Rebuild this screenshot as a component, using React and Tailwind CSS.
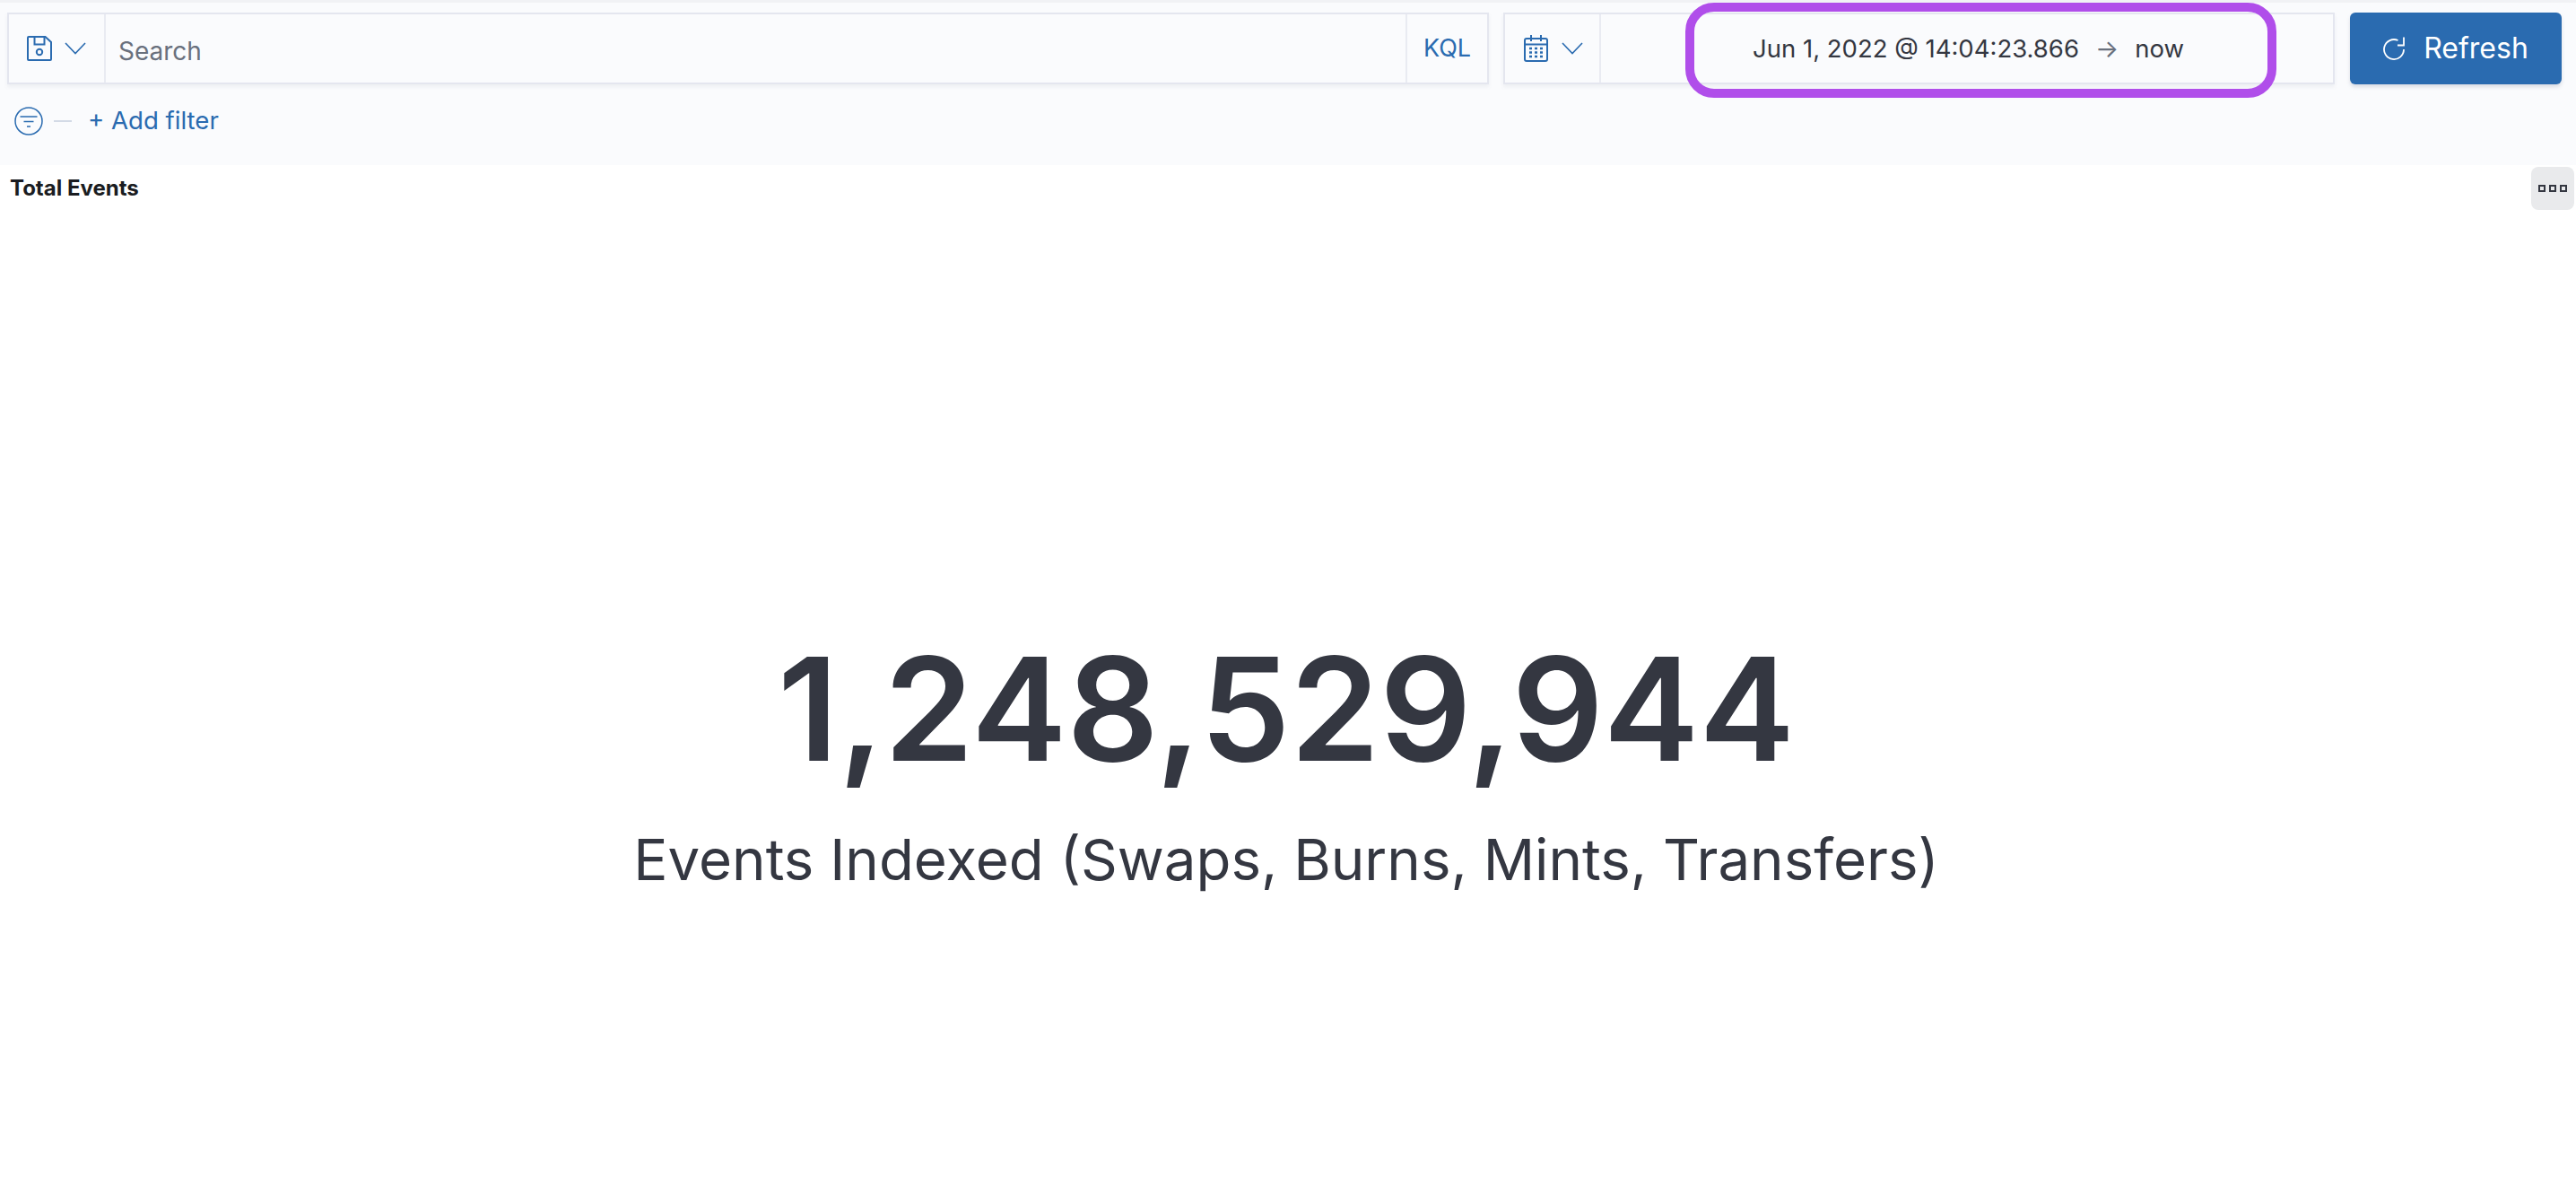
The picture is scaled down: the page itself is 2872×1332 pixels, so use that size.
function Chevron() {
  return (
    <svg viewBox="0 0 24 14" fill="none" stroke="#2a6bb0" strokeWidth="1.600" className="w-[24px] h-[14px]">
      <path d="M1 1l11 11.500L23 1" />
    </svg>
  )
}

function SaveIcon() {
  return (
    <svg viewBox="0 0 28 28" fill="none" stroke="#2a6bb0" strokeWidth="2" className="w-[28px] h-[28px]">
      <path d="M1 2a1 1 0 0 1 1-1h18.500L27 7v19a1 1 0 0 1-1 1H2a1 1 0 0 1-1-1z" />
      <path d="M8.500 1v8.500h11V1" />
      <circle cx="14" cy="18" r="3.200" />
    </svg>
  )
}

function CalendarIcon() {
  return (
    <svg viewBox="0 0 27 30" fill="none" stroke="#2a6bb0" className="w-[27px] h-[30px]">
      <rect x="1" y="4" width="25" height="25" rx="2" strokeWidth="2" />
      <path d="M1 10.500h25M8 0v7M19 0v7" strokeWidth="2" />
      <path d="M6 15h15M6 19.500h15M6 24h15" strokeWidth="2.500" strokeDasharray="3 3" />
    </svg>
  )
}

function FilterIcon() {
  return (
    <svg viewBox="0 0 32 32" fill="none" stroke="#2a6bb0" className="w-[32px] h-[32px]">
      <circle cx="16" cy="16" r="15" strokeWidth="1.500" />
      <path d="M6.500 11h19M10.500 16.500h11M14 22h4" strokeWidth="1.700" />
    </svg>
  )
}

function RefreshIcon() {
  return (
    <svg viewBox="0 0 24 26" fill="none" stroke="#ffffff" strokeWidth="1.800" className="w-[24px] h-[26px]">
      <path d="M23 14a11 11 0 1 1-6.500-10" />
      <path d="M23 0.500V9.500h-7" />
    </svg>
  )
}

export default function App() {
  return (
    <div className="min-h-[1332px] bg-white font-['Inter',sans-serif] text-[#343741]">
      <header className="h-[184px] bg-[#fafbfd] border-t-[3px] border-[#f1f2f5]">
        <div className="flex items-start pt-[11px] pl-[8px] pr-[16px]">
          <div className="flex w-[1652px] h-[80px] border-2 border-[#e4e6ef] shadow-[0_3px_4px_rgba(90,100,130,0.08)]">
            <div className="w-[108px] shrink-0 flex items-center gap-[14px] pl-[20px] border-r-2 border-[#e9ebf2]">
              <SaveIcon />
              <Chevron />
            </div>
            <div className="flex-1 flex items-center pl-[14px] pt-[5px] text-[28px] text-[#69707d]">Search</div>
            <div className="w-[91px] shrink-0 flex items-center justify-center border-l-2 border-[#e9ebf2] text-[27px] text-[#2a6bb0]">KQL</div>
          </div>
          <div className="relative flex w-[927px] h-[80px] ml-[16px] border-2 border-[#e4e6ef] shadow-[0_3px_4px_rgba(90,100,130,0.08)]">
            <div className="w-[107px] shrink-0 flex items-center gap-[15px] pl-[21px] border-r-2 border-[#e9ebf2]">
              <CalendarIcon />
              <Chevron />
            </div>
            <div className="absolute left-[201px] top-[-13px] w-[659px] h-[106px] border-[10px] border-[#b04eea] rounded-[32px] flex items-center pl-[65px] pb-[2px] gap-[18px] text-[27.500px] whitespace-nowrap">
              <span>Jun 1, 2022 @ 14:04:23.866</span>
              <span className="text-[#69707d]">→</span>
              <span>now</span>
            </div>
          </div>
          <button className="ml-[17px] w-[236px] h-[80px] rounded-[6px] bg-[#2a6bb0] shadow-[0_3px_4px_rgba(90,100,130,0.2)] flex items-center justify-center gap-[21px] text-white text-[32px] font-normal">
            <RefreshIcon />
            Refresh
          </button>
        </div>
        <div className="flex items-center pt-[20px] pl-[16px]">
          <FilterIcon />
          <span className="ml-[12px] w-[20px] h-[2px] bg-[#d3dae6]" />
          <span className="ml-[18px] text-[27.600px] text-[#2a6bb0]">+ Add filter</span>
        </div>
      </header>
      <div className="flex items-start justify-between pl-[11px] pr-[2px] pt-[2px]">
        <span className="mt-[6px] text-[24px] font-bold text-[#1a1c21]">Total Events</span>
        <div className="w-[48px] h-[48px] rounded-[8px] bg-[#e9eaec] flex items-center justify-center gap-[4px]">
          <span className="w-[8px] h-[8px] border-2 border-[#343741]" />
          <span className="w-[8px] h-[8px] border-2 border-[#343741]" />
          <span className="w-[8px] h-[8px] border-2 border-[#343741]" />
        </div>
      </div>
      <div className="flex flex-col items-center pt-[453px] pr-[4px]">
        <div className="text-[160px] leading-[206px] font-semibold">1,248,529,944</div>
        <div className="mt-[26px] text-[63.600px] leading-[78px]">Events Indexed (Swaps, Burns, Mints, Transfers)</div>
      </div>
    </div>
  )
}
